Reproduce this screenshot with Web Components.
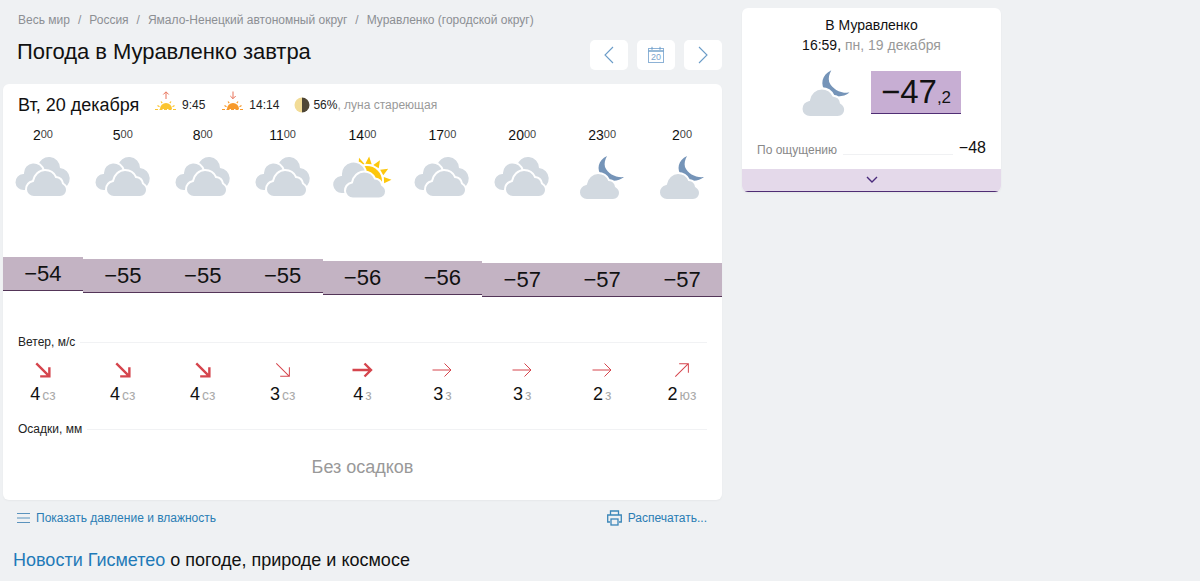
<!DOCTYPE html>
<html lang="ru">
<head>
<meta charset="utf-8">
<title>Погода в Муравленко завтра</title>
<style>
  html, body { margin: 0; height: 100%; }
  body {
    background: #eff1f3;
    color: #111;
    font-family: "Liberation Sans", Arial, sans-serif;
    overflow: hidden;
  }
</style>
</head>
<body>
<gm-page>
  <gm-breadcrumbs slot="crumbs"></gm-breadcrumbs>
  <gm-title-bar slot="title">Погода в Муравленко завтра</gm-title-bar>
  <gm-forecast slot="forecast"></gm-forecast>
  <gm-actions slot="actions"></gm-actions>
  <gm-news slot="news"></gm-news>
  <gm-now slot="aside"></gm-now>
</gm-page>

<script>
const CLOUD = 'M8 27C3.5 27 0 23.5 0 19.5C0 15 3 12 7 11C8 5 13 0 19 0C24 0 28 2.5 30 7C34 7.5 36.5 10 37 13.5C39.5 15 41 17.5 41 20C41 24 38 27 34 27Z';
const CLOUD_FILL = '#d2d9e0';

function cloudAt(x, y, outline) {
  const stroke = outline ? 'stroke="#fff" stroke-width="2"' : '';
  return `<path d="${CLOUD}" transform="translate(${x} ${y})" fill="${CLOUD_FILL}" ${stroke}/>`;
}

const ICONS = {
  overcast: `
    <g transform="translate(1 0)">
      <path d="M24 13A11.1 11.1 0 0 1 46 15A10.6 10.6 0 0 1 47 36L24 36Z" fill="${CLOUD_FILL}"/>
      <path d="M10 38A9 9 0 0 1 9 20A10.6 10.6 0 0 1 30 18L30 38Z" fill="${CLOUD_FILL}" stroke="#fff" stroke-width="2"/>
      ${cloudAt(12, 17, true)}
    </g>`,
  sun: `
    <g transform="translate(.5 0)">
      <circle cx="34.5" cy="28" r="15" fill="#fdc70c"/>
      ${[-19, 5, 32, 60, 87].map(a => `<polygon points="34.5,3.5 31.3,11 37.7,11" fill="#fdc70c" transform="rotate(${a} 34.5 28)"/>`).join('')}
      <path d="M10 41A9.5 9.5 0 0 1 8.5 22A12.6 12.6 0 0 1 33 17L33 41Z" fill="${CLOUD_FILL}" stroke="#fff" stroke-width="2"/>
      ${cloudAt(12.5, 18.5, true)}
    </g>`,
  moon: `
    <path d="M35 3C26 7 24 17 30 23C36 29 46 29 52 24C44 25 36 21 33 14C32 10 33 7 35 3Z" fill="#7594b8"/>
    ${cloudAt(7, 20, true)}`
};

class GmIcon extends HTMLElement {
  connectedCallback() {
    const w = this.getAttribute('size') || 60;
    const h = w * 48 / 60;
    this.attachShadow({ mode: 'open' }).innerHTML = `
      <style>
        :host { display: block; width: ${w}px; height: ${h}px; }
        svg { display: block; }
      </style>
      <svg width="${w}" height="${h}" viewBox="0 0 60 48">${ICONS[this.getAttribute('kind')]}</svg>
    `;
  }
}
customElements.define('gm-icon', GmIcon);

class GmPage extends HTMLElement {
  constructor() {
    super();
    this.attachShadow({ mode: 'open' }).innerHTML = `
      <style>
        :host { display: flex; gap: 20px; align-items: flex-start; padding-left: 3px; }
        .main { width: 719px; flex: none; }
        .side { width: 259px; flex: none; padding-top: 8px; }
      </style>
      <div class="main">
        <slot name="crumbs"></slot>
        <slot name="title"></slot>
        <slot name="forecast"></slot>
        <slot name="actions"></slot>
        <slot name="news"></slot>
      </div>
      <div class="side"><slot name="aside"></slot></div>
    `;
  }
}
customElements.define('gm-page', GmPage);

class GmBreadcrumbs extends HTMLElement {
  constructor() {
    super();
    const items = ['Весь мир', 'Россия', 'Ямало-Ненецкий автономный округ', 'Муравленко (городской округ)'];
    this.attachShadow({ mode: 'open' }).innerHTML = `
      <style>
        :host {
          display: flex;
          align-items: center;
          height: 40px;
          padding-left: 15px;
          font-size: 12px;
          color: #8c8f93;
        }
        i { font-style: normal; margin: 0 8px; }
      </style>
      ${items.map(t => `<span>${t}</span>`).join('<i>/</i>')}
    `;
  }
}
customElements.define('gm-breadcrumbs', GmBreadcrumbs);

class GmTitleBar extends HTMLElement {
  constructor() {
    super();
    this.attachShadow({ mode: 'open' }).innerHTML = `
      <style>
        :host {
          display: flex;
          align-items: center;
          justify-content: space-between;
          height: 30px;
          margin-bottom: 14px;
          padding-left: 14px;
        }
        h1 { margin: 0; font-size: 22px; font-weight: 400; letter-spacing: -.04px; color: #111; line-height: 26px; position: relative; top: -3px; }
        nav { display: flex; gap: 9px; }
        .btn {
          width: 38px;
          height: 30px;
          background: #fff;
          border-radius: 5px;
          display: flex;
          align-items: center;
          justify-content: center;
        }
        svg { display: block; }
      </style>
      <h1><slot></slot></h1>
      <nav>
        <div class="btn">
          <svg width="12" height="18" viewBox="0 0 12 18"><path d="M10 1L2 9l8 8" fill="none" stroke="#6b9cc8" stroke-width="1.1"/></svg>
        </div>
        <div class="btn">
          <svg width="18" height="18" viewBox="0 0 18 18">
            <rect x="1.5" y="2.5" width="15" height="14" fill="#fff" stroke="#8db2d6"/>
            <path d="M1.5 5h15" stroke="#6b9cc8" stroke-width="1.4"/>
            <path d="M5 .8v3M13 .8v3" stroke="#6b9cc8"/>
            <text x="9" y="14.3" font-size="9" text-anchor="middle" fill="#7ba5cc" font-family="Liberation Sans">20</text>
          </svg>
        </div>
        <div class="btn">
          <svg width="12" height="18" viewBox="0 0 12 18"><path d="M2 1l8 8-8 8" fill="none" stroke="#6b9cc8" stroke-width="1.1"/></svg>
        </div>
      </nav>
    `;
  }
}
customElements.define('gm-title-bar', GmTitleBar);

class GmSunTime extends HTMLElement {
  connectedCallback() {
    const down = this.getAttribute('dir') === 'down';
    const disc = down ? '#f79a2c' : '#fbc530';
    const arrow = down ? 'M12 .5v7M9.3 5l2.7 2.7L14.7 5' : 'M12 8V1M9.3 3.5L12 .8l2.7 2.7';
    this.attachShadow({ mode: 'open' }).innerHTML = `
      <style>
        :host { display: inline-flex; align-items: center; gap: 4px; font-size: 12px; color: #222; }
        svg { display: block; margin-bottom: 8px; }
      </style>
      <svg width="24" height="20" viewBox="0 0 24 20">
        <path d="${arrow}" fill="none" stroke="#e8735a" stroke-width="1"/>
        <path d="M6 18a6 6 0 0 1 12 0z" fill="${disc}"/>
        <path d="M1 18.5h22" stroke="${disc}" stroke-width="1" stroke-dasharray="3 1.5"/>
        <path d="M3.5 14.5l2 1.2M20.5 14.5l-2 1.2M7 10.5l1.2 1.7M17 10.5l-1.2 1.7" stroke="${disc}" stroke-width="1.2"/>
      </svg>
      <span><slot></slot></span>
    `;
  }
}
customElements.define('gm-sun-time', GmSunTime);

class GmRowLabel extends HTMLElement {
  constructor() {
    super();
    this.attachShadow({ mode: 'open' }).innerHTML = `
      <style>
        :host {
          display: flex;
          align-items: center;
          gap: 5px;
          height: 14px;
          padding: 0 15px;
          font-size: 12px;
          color: #222;
        }
        .line { flex: 1; height: 1px; background: #f1f2f4; }
      </style>
      <span><slot></slot></span><div class="line"></div>
    `;
  }
}
customElements.define('gm-row-label', GmRowLabel);

class GmWindArrow extends HTMLElement {
  connectedCallback() {
    const bold = this.hasAttribute('bold');
    const rot = { se: 45, e: 0, ne: -45 }[this.getAttribute('dir')];
    const sw = bold ? 2.4 : 1;
    this.attachShadow({ mode: 'open' }).innerHTML = `
      <style>
        :host { display: block; width: 22px; height: 22px; margin: -2px auto 0; }
        svg { display: block; }
      </style>
      <svg width="22" height="22" viewBox="0 0 22 22">
        <g transform="rotate(${rot} 11 11)" fill="none" stroke="#d5454d" stroke-width="${sw}">
          <path d="M1.5 11H20M13.5 4.5L20 11l-6.5 6.5"/>
        </g>
      </svg>
    `;
  }
}
customElements.define('gm-wind-arrow', GmWindArrow);

class GmForecast extends HTMLElement {
  constructor() {
    super();
    const hours = [2, 5, 8, 11, 14, 17, 20, 23, 2];
    const kinds = ['overcast', 'overcast', 'overcast', 'overcast', 'sun', 'overcast', 'overcast', 'moon', 'moon'];
    const temps = [54, 55, 55, 55, 56, 56, 57, 57, 57];
    const wind = [
      [4, 'сз', 'se', 1], [4, 'сз', 'se', 1], [4, 'сз', 'se', 1], [3, 'сз', 'se', 0], [4, 'з', 'e', 1],
      [3, 'з', 'e', 0], [3, 'з', 'e', 0], [2, 'з', 'e', 0], [2, 'юз', 'ne', 0]
    ];
    this.attachShadow({ mode: 'open' }).innerHTML = `
      <style>
        :host {
          display: block;
          height: 416px;
          background: #fff;
          border-radius: 6px;
          box-shadow: 0 1px 2px rgba(0, 0, 0, .04);
          overflow: hidden;
        }
        .head {
          display: flex;
          align-items: center;
          height: 42px;
          padding-left: 15px;
        }
        .date { font-size: 18px; color: #111; width: 136px; }
        .head gm-sun-time + gm-sun-time { margin-left: 16px; }
        .moon { display: flex; align-items: center; gap: 3px; margin-left: 15px; font-size: 12px; color: #999; }
        .moon b { font-weight: 400; color: #222; }
        .moon svg { display: block; }
        .row { display: grid; grid-template-columns: repeat(9, 1fr); text-align: center; }
        .hours { height: 18px; font-size: 14px; line-height: 18px; color: #111; }
        .hours sup { font-size: 11px; color: #444; vertical-align: 2px; line-height: 0; }
        .icons { height: 48px; margin-top: 9px; }
        .icons gm-icon { margin: 0 auto; }
        .temps { height: 40px; margin-top: 56px; }
        .temp {
          box-sizing: border-box;
          height: 34px;
          background: #c3b3c3;
          border-bottom: 1.5px solid #533558;
          font-size: 22px;
          line-height: 33px;
          color: #111;
        }
        .wind-arrows { height: 18px; margin-top: 12px; }
        .wind { height: 20px; margin-top: 5px; font-size: 18px; line-height: 20px; color: #111; }
        .wind small { font-size: 14px; color: #aaa; margin-left: 2px; }
        .none { margin-top: 19px; text-align: center; font-size: 18px; line-height: 24px; color: #999; }
      </style>
      <div class="head">
        <div class="date">Вт, 20 декабря</div>
        <gm-sun-time dir="up">9:45</gm-sun-time>
        <gm-sun-time dir="down">14:14</gm-sun-time>
        <div class="moon">
          <svg width="16" height="16" viewBox="0 0 16 16">
            <path d="M8 .5a7.5 7.5 0 0 0 0 15z" fill="#f2dc97"/>
            <path d="M8 .5a7.5 7.5 0 0 1 0 15z" fill="#4f4636"/>
          </svg>
          <span><b>56%</b>, луна стареющая</span>
        </div>
      </div>
      <div class="row hours">
        ${hours.map(h => `<div>${h}<sup>00</sup></div>`).join('')}
      </div>
      <div class="row icons">
        ${kinds.map(k => `<gm-icon kind="${k}"></gm-icon>`).join('')}
      </div>
      <div class="row temps">
        ${temps.map(t => `<div class="temp" style="margin-top:${(t - 54) * 2}px">−${t}</div>`).join('')}
      </div>
      <gm-row-label style="margin-top:38px">Ветер, м/с</gm-row-label>
      <div class="row wind-arrows">
        ${wind.map(w => `<gm-wind-arrow dir="${w[2]}" ${w[3] ? 'bold' : ''}></gm-wind-arrow>`).join('')}
      </div>
      <div class="row wind">
        ${wind.map(w => `<div>${w[0]}<small>${w[1]}</small></div>`).join('')}
      </div>
      <gm-row-label style="margin-top:18px">Осадки, мм</gm-row-label>
      <div class="none">Без осадков</div>
    `;
  }
}
customElements.define('gm-forecast', GmForecast);

class GmActions extends HTMLElement {
  constructor() {
    super();
    this.attachShadow({ mode: 'open' }).innerHTML = `
      <style>
        :host {
          display: flex;
          justify-content: space-between;
          align-items: center;
          height: 36px;
          padding: 0 15px 0 14px;
          font-size: 12px;
          color: #2a7db4;
        }
        a { display: flex; align-items: center; gap: 6px; color: inherit; text-decoration: none; }
        svg { display: block; }
      </style>
      <a>
        <svg width="13" height="12" viewBox="0 0 13 12"><path d="M0 1.5h13M0 6h13M0 10.5h13" stroke="#5b93bd" stroke-width="1.2"/></svg>
        Показать давление и влажность
      </a>
      <a>
        <svg width="15" height="16" viewBox="0 0 15 16" fill="none" stroke="#3b86b8" stroke-width="1.3">
          <path d="M3.5 5V1h8v4"/>
          <path d="M3 12H.7V5h13.6v7H12"/>
          <rect x="4" y="9" width="7" height="6"/>
        </svg>
        Распечатать...
      </a>
    `;
  }
}
customElements.define('gm-actions', GmActions);

class GmNews extends HTMLElement {
  constructor() {
    super();
    this.attachShadow({ mode: 'open' }).innerHTML = `
      <style>
        :host {
          display: block;
          margin-top: 13px;
          padding-left: 10px;
          font-size: 18px;
          line-height: 22px;
          color: #111;
        }
        a { color: #1f7ab8; text-decoration: none; }
      </style>
      <a>Новости Гисметео</a> о погоде, природе и космосе
    `;
  }
}
customElements.define('gm-news', GmNews);

class GmNow extends HTMLElement {
  constructor() {
    super();
    this.attachShadow({ mode: 'open' }).innerHTML = `
      <style>
        :host {
          display: block;
          height: 184px;
          background: #fff;
          border-radius: 6px;
          box-shadow: 0 1px 2px rgba(0, 0, 0, .05);
          overflow: hidden;
          text-align: center;
          font-size: 14px;
          color: #111;
        }
        .city { height: 18px; margin-top: 8px; line-height: 18px; }
        .time { height: 18px; margin-top: 2px; line-height: 18px; }
        .time span { color: #999; }
        .main { display: flex; height: 50px; margin-top: 15px; padding-left: 52px; gap: 13px; }
        .main gm-icon { margin-top: -2px; }
        .temp {
          box-sizing: border-box;
          width: 90px;
          height: 43px;
          margin-top: 2px;
          background: #c7aed3;
          border-bottom: 1px solid #4f2d74;
          font-size: 33px;
          line-height: 41px;
          color: #111;
        }
        .temp small { font-size: 17px; }
        .feels {
          display: flex;
          align-items: flex-end;
          gap: 6px;
          height: 18px;
          margin-top: 20px;
          padding: 0 15px;
          font-size: 12px;
          color: #888;
        }
        .feels .line { flex: 1; height: 1px; background: #f0f1f3; margin-bottom: 2px; }
        .feels b { font-weight: 400; font-size: 16px; line-height: 18px; color: #111; }
        .more {
          box-sizing: border-box;
          display: flex;
          align-items: center;
          justify-content: center;
          height: 23px;
          margin-top: 12px;
          background: #e4d9ea;
          border-bottom: 1px solid #4f2d74;
        }
        svg { display: block; }
      </style>
      <div class="city">В Муравленко</div>
      <div class="time">16:59, <span>пн, 19 декабря</span></div>
      <div class="main">
        <gm-icon kind="moon" size="64"></gm-icon>
        <div class="temp">−47<small>,2</small></div>
      </div>
      <div class="feels"><span>По ощущению</span><div class="line"></div><b>−48</b></div>
      <div class="more">
        <svg width="12" height="8" viewBox="0 0 12 8"><path d="M1 1l5 5 5-5" fill="none" stroke="#4a2a7c" stroke-width="1.4"/></svg>
      </div>
    `;
  }
}
customElements.define('gm-now', GmNow);
</script>
</body>
</html>
